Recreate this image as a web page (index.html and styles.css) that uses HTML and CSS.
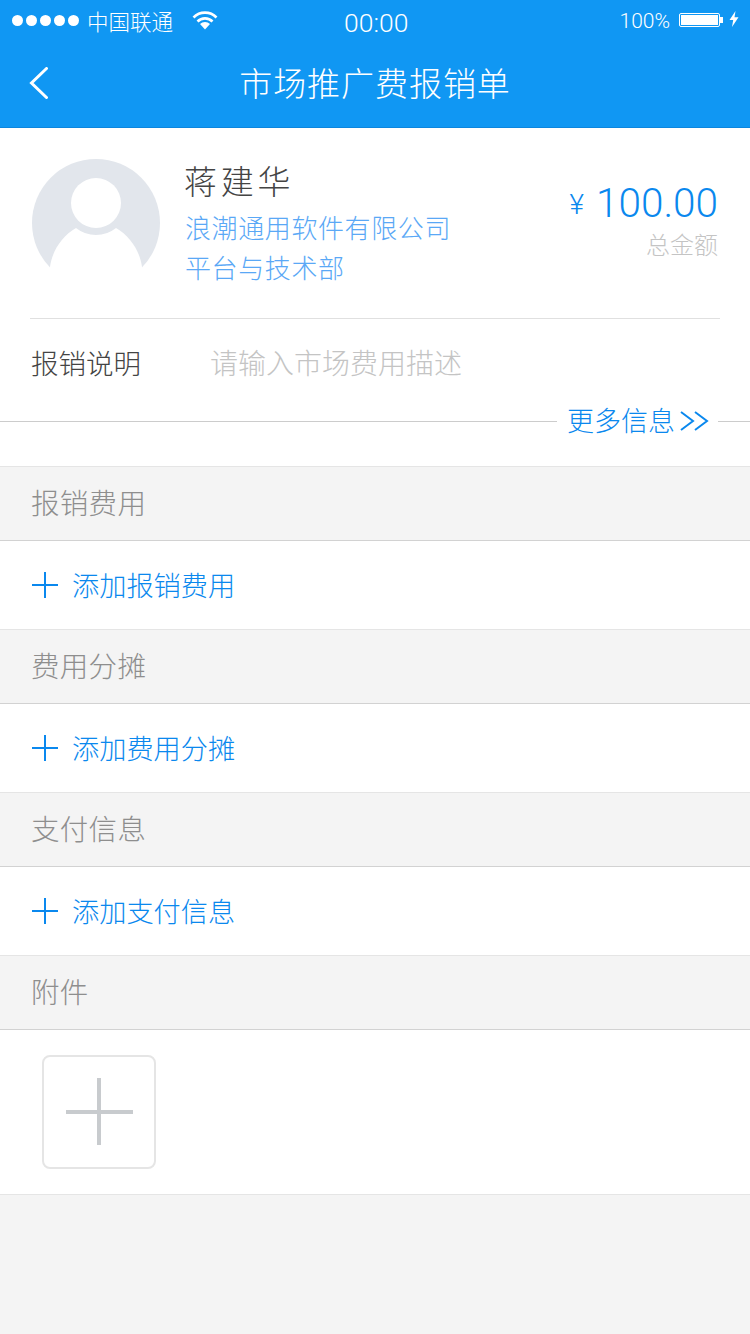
FILE: index.html
```html
<html lang="zh">
<head>
    <title>市场推广费报销单</title>
    <link rel="stylesheet" href="styles.css">
</head>
<body>
    <div class="header">
        <div class="status">
            <div class="signal">
                <i></i><i></i><i></i><i></i><i></i>
            </div>
            <span class="carrier">中国联通</span>
            <svg class="wifi" width="26" height="20" viewBox="0 0 26 20">
                <path d="M1.5 7.5 A16 16 0 0 1 24.5 7.5" fill="none" stroke="#fff" stroke-width="2.6"/>
                <path d="M5.5 11.5 A10.5 10.5 0 0 1 20.5 11.5" fill="none" stroke="#fff" stroke-width="2.6"/>
                <path d="M8 14 A7 7 0 0 1 18 14 L13 19.5 Z" fill="#fff"/>
            </svg>
            <span class="time">00:00</span>
            <div class="status-right">
                <span class="percent">100%</span>
                <div class="battery"><div class="battery-fill"></div></div>
                <div class="battery-tip"></div>
                <svg class="bolt" width="10" height="16" viewBox="0 0 10 16">
                    <path d="M6.5 0 L0.5 9 L4.2 9 L3 16 L9.5 6.2 L5.5 6.2 Z" fill="#fff"/>
                </svg>
            </div>
        </div>
        <div class="nav">
            <svg class="back" width="20" height="32" viewBox="0 0 20 32">
                <path d="M17.5 1.5 L2.5 16 L17.5 30.5" fill="none" stroke="#fff" stroke-width="3" stroke-linecap="round"/>
            </svg>
            <h1>市场推广费报销单</h1>
        </div>
    </div>

    <div class="main">
        <div class="profile">
            <svg class="avatar" width="128" height="128" viewBox="0 0 128 128">
                <circle cx="64" cy="64" r="64" fill="#e2e6ec"/>
                <circle cx="64" cy="44" r="25" fill="#fff"/>
                <path d="M18 108 C20 92 30 77 44 69 A32 32 0 0 0 84 69 C98 77 108 92 110 108 L110 128 L18 128 Z" fill="#fff"/>
            </svg>
            <div class="person">
                <div class="name">蒋建华</div>
                <div class="org">浪潮通用软件有限公司</div>
                <div class="org">平台与技术部</div>
            </div>
            <div class="total">
                <div class="amount"><span class="yen">¥</span>100.00</div>
                <div class="total-label">总金额</div>
            </div>
        </div>
        <div class="desc">
            <span class="desc-label">报销说明</span>
            <span class="desc-hint">请输入市场费用描述</span>
        </div>
        <div class="more">
            <div class="more-line"></div>
            <span class="more-text">更多信息</span>
            <svg class="more-arrows" width="30" height="22" viewBox="0 0 30 22">
                <path d="M1 2 L13 11 L1 20 M15 2 L27 11 L15 20" fill="none" stroke="#0a88ee" stroke-width="2"/>
            </svg>
            <div class="more-end"></div>
        </div>
    </div>

    <div class="section first">报销费用</div>
    <div class="add-row">
        <span class="plus"></span>
        <span class="add-text">添加报销费用</span>
    </div>
    <div class="section">费用分摊</div>
    <div class="add-row">
        <span class="plus"></span>
        <span class="add-text">添加费用分摊</span>
    </div>
    <div class="section">支付信息</div>
    <div class="add-row">
        <span class="plus"></span>
        <span class="add-text">添加支付信息</span>
    </div>
    <div class="section">附件</div>
    <div class="attach">
        <div class="attach-box"><span class="attach-plus"></span></div>
    </div>
</body>
</html>
```
FILE: styles.css
```css
html, body {
    margin: 0;
    padding: 0;
}
body {
    width: 750px;
    height: 1334px;
    overflow: hidden;
    background-color: #f4f4f4;
    font-family: "Noto Sans CJK SC", sans-serif;
    font-weight: 300;
}
.header {
    height: 127px;
    background-color: #1097f3;
    border-bottom: 1px solid #0c86de;
    color: #fff;
}
.status {
    height: 40px;
    display: flex;
    align-items: center;
    padding: 0 11px 0 12px;
}
.signal {
    display: flex;
    gap: 3px;
    width: 76px;
}
.signal i {
    display: block;
    width: 11px;
    height: 11px;
    border-radius: 50%;
    background-color: #fff;
}
.carrier {
    font-size: 21.5px;
    width: 105px;
    margin-left: -1px;
}
.wifi {
    margin-top: 0;
}
.time {
    font-family: Roboto, sans-serif;
    font-size: 26.5px;
    margin-top: 4px;
    margin-left: 126px;
    width: 64px;
    text-align: center;
}
.status-right {
    margin-left: auto;
    display: flex;
    align-items: center;
}
.percent {
    font-family: Roboto, sans-serif;
    font-size: 21px;
    margin-top: 2px;
    margin-right: 9px;
}
.battery {
    width: 37px;
    height: 10px;
    padding: 1px;
    border: 1px solid #fff;
    border-radius: 2px;
}
.battery-fill {
    height: 100%;
    background-color: #fff;
}
.battery-tip {
    width: 3px;
    height: 6px;
    background-color: #fff;
}
.bolt {
    margin-left: 6px;
    margin-top: -2px;
}
.nav {
    height: 87px;
    display: flex;
    align-items: center;
    justify-content: center;
    position: relative;
}
.nav h1 {
    margin: -4px 0 0;
    font-size: 33px;
    font-weight: 300;
    letter-spacing: 0.95px;
}
.back {
    position: absolute;
    left: 29px;
    top: 27px;
}
.main {
    height: 338px;
    background-color: #fff;
}
.profile {
    height: 191px;
    margin: 0 30px;
    box-sizing: border-box;
    border-bottom: 1px solid #e0e0e0;
    display: flex;
    padding: 31px 2px 0;
}
.avatar {
    flex-shrink: 0;
}
.person {
    margin-left: 25px;
}
.name {
    font-size: 33px;
    letter-spacing: 3.8px;
    line-height: 42px;
    margin-bottom: 6px;
    margin-left: -1px;
    color: #444;
}
.org {
    font-size: 26px;
    letter-spacing: 0.6px;
    line-height: 39.5px;
    color: #5aa8f6;
}
.total {
    margin-left: auto;
    text-align: right;
    padding-top: 20px;
}
.amount {
    font-family: Roboto, sans-serif;
    font-size: 40.5px;
    line-height: 48px;
    color: #0a88ee;
}
.yen {
    font-size: 28px;
    margin-right: 12px;
    vertical-align: 3px;
}
.total-label {
    font-size: 24px;
    line-height: 30px;
    color: #c4c4c4;
}
.desc {
    height: 78px;
    padding: 4px 31px 0;
    display: flex;
    align-items: center;
}
.desc-label {
    font-size: 27.5px;
    color: #444;
    width: 180px;
}
.desc-hint {
    font-size: 28px;
    color: #c4c4c4;
    margin-left: -1px;
}
.more {
    height: 40px;
    display: flex;
    align-items: center;
    color: #0a88ee;
    font-size: 27px;
}
.more-line {
    width: 557px;
    height: 1px;
    background-color: #ccc;
}
.more-text {
    margin-left: 10px;
    margin-top: -4px;
}
.more-arrows {
    margin-left: 5px;
    margin-top: -1px;
}
.more-end {
    flex: 1;
    height: 1px;
    margin-left: 8px;
    background-color: #ccc;
}
.section {
    height: 68px;
    padding-left: 31px;
    padding-bottom: 5px;
    display: flex;
    align-items: center;
    font-size: 28.5px;
    letter-spacing: 0.3px;
    color: #8e8e8e;
    border-bottom: 1px solid #d2d2d2;
}
.section.first {
    border-top: 1px solid #e5e5e5;
}
.add-row {
    height: 88px;
    padding-left: 32px;
    display: flex;
    align-items: center;
    background-color: #fff;
    border-bottom: 1px solid #e5e5e5;
    color: #0a88ee;
    font-size: 27.2px;
}
.add-text {
    margin-top: -2px;
    margin-left: -1px;
}
.plus {
    position: relative;
    width: 26px;
    height: 26px;
    margin-right: 15px;
}
.plus::before, .plus::after {
    content: "";
    position: absolute;
    background-color: #0a88ee;
}
.plus::before {
    left: 0;
    right: 0;
    top: 12px;
    height: 2px;
}
.plus::after {
    top: 0;
    bottom: 0;
    left: 12px;
    width: 2px;
}
.attach {
    height: 165px;
    padding: 25px 0 0 42px;
    box-sizing: border-box;
    background-color: #fff;
    border-bottom: 1px solid #e5e5e5;
}
.attach-box {
    width: 114px;
    height: 114px;
    box-sizing: border-box;
    border: 2px solid #e5e5e5;
    border-radius: 8px;
    display: flex;
    align-items: center;
    justify-content: center;
}
.attach-plus {
    position: relative;
    width: 67px;
    height: 67px;
    margin-top: -2px;
}
.attach-plus::before, .attach-plus::after {
    content: "";
    position: absolute;
    background-color: #c8cbce;
}
.attach-plus::before {
    left: 0;
    right: 0;
    top: 32px;
    height: 4px;
}
.attach-plus::after {
    top: 0;
    bottom: 0;
    left: 31px;
    width: 4px;
}
```
